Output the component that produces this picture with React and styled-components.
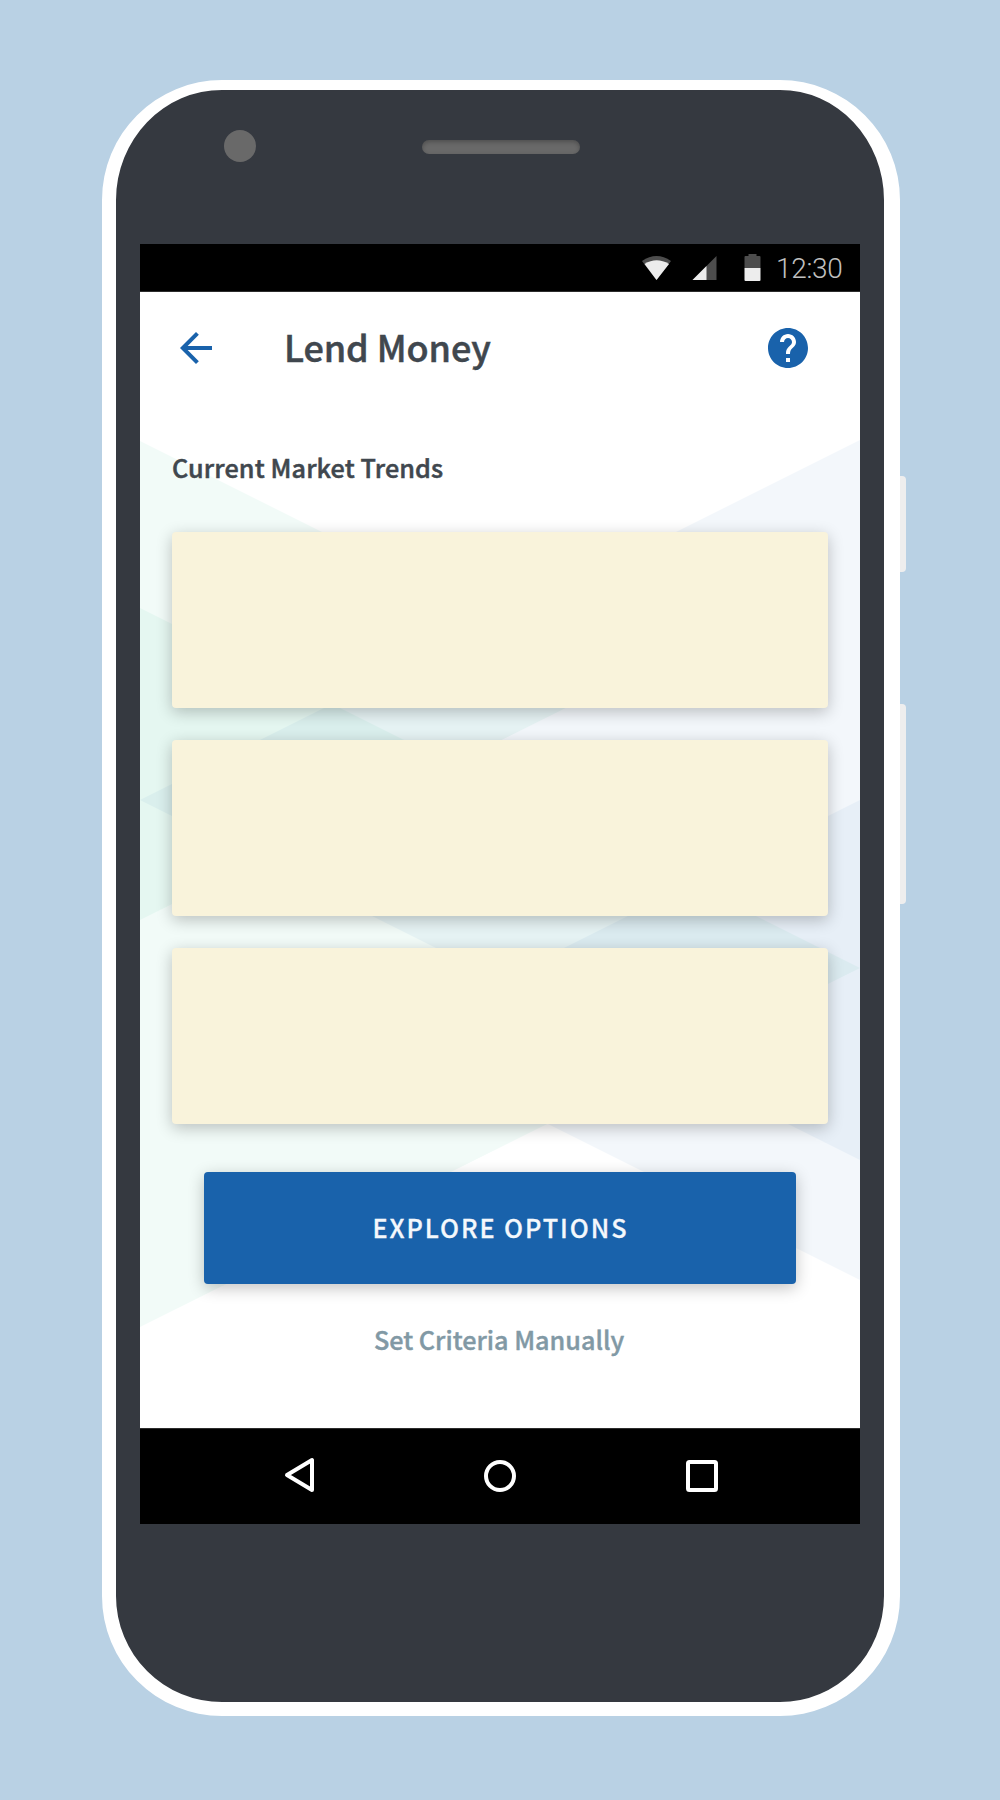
import React from "react";
import styled, { createGlobalStyle } from "styled-components";

const GlobalStyle = createGlobalStyle`
  body { margin: 0; background: #b9d1e4; }
  *, *::before, *::after { box-sizing: border-box; }
`;

const sans = `"Noto Sans CJK SC", "Noto Sans", sans-serif`;

const Stage = styled.main`
  height: 1800px;
  padding: 80px 94px 84px 102px;
  display: flex;
  background: #b9d1e4;
`;

const Phone = styled.div`
  width: 798px;
  height: 1636px;
  flex: none;
  padding: 0 24px;
  display: flex;
  flex-direction: column;
  background: #353940;
  border: solid #fff;
  border-width: 10px 16px 14px 14px;
  border-radius: 120px;
`;

const Earpiece = styled.div`
  height: 154px;
  flex: none;
  display: flex;
  align-items: flex-start;
  padding: 39.5px 0 0 84px;
`;

const Camera = styled.div`
  width: 32px;
  height: 32px;
  border-radius: 50%;
  background: #696969;
`;

const Speaker = styled.div`
  width: 158px;
  height: 14px;
  margin: 10.5px 0 0 166px;
  border-radius: 7px;
  background: #696969;
  box-shadow: inset 0 2px 4px rgba(0, 0, 0, 0.25);
`;

const SideKeys = styled.div`
  width: 6px;
  padding-top: 396px;
  display: flex;
  flex-direction: column;
  gap: 132px;
`;

const SideKey = styled.div`
  height: ${(p) => p.$height}px;
  flex: none;
  background: #eee;
  border-radius: 0 4px 4px 0;
`;

const Screen = styled.div`
  width: 720px;
  height: 1280px;
  flex: none;
  display: flex;
  flex-direction: column;
  background: #fff;
`;

const StatusBar = styled.div`
  height: 48px;
  flex: none;
  display: flex;
  align-items: center;
  justify-content: flex-end;
  padding-right: 17.5px;
  background: #000;
  border-bottom: 1px solid #2c2c2c;
`;

const StatusIcons = styled.svg`
  display: block;
  width: 136px;
  height: 47px;
`;

const Clock = styled.span`
  font: 300 28px/47px Roboto, sans-serif;
  letter-spacing: -0.3px;
  color: #c0c0c0;
  padding-top: 2px;
`;

const Content = styled.div`
  position: relative;
  flex: 1;
  display: flex;
  flex-direction: column;
`;

const Backdrop = styled.svg`
  position: absolute;
  inset: 0;
  width: 720px;
  height: 1136px;
`;

const AppBar = styled.header`
  position: relative;
  height: 112px;
  flex: none;
  display: flex;
  align-items: center;
  padding: 0 48px 0 32px;
`;

const Glyph = styled.svg`
  display: block;
  flex: none;
  width: 48px;
  height: 48px;
`;

const Title = styled.h1`
  flex: 1;
  margin: 0 0 4px 64px;
  font: 500 36px/48px ${sans};
  letter-spacing: -0.1px;
  -webkit-text-stroke: 0.5px;
  color: #40474e;
  white-space: nowrap;
`;

const Body = styled.section`
  position: relative;
  padding: 41px 32px 0;
  display: flex;
  flex-direction: column;
`;

const Subtitle = styled.h2`
  margin: 0;
  height: 87px;
  font: 500 25.2px/44px ${sans};
  letter-spacing: 0.12px;
  -webkit-text-stroke: 0.5px;
  color: #40474e;
  white-space: nowrap;
`;

const CardList = styled.div`
  display: flex;
  flex-direction: column;
  gap: 32px;
`;

const Card = styled.article`
  height: 176px;
  border-radius: 4px;
  background: #f9f3db;
  box-shadow: 0 4px 16px rgba(0, 0, 0, 0.24);
`;

const PrimaryButton = styled.button`
  height: 112px;
  margin: 48px 32px 0;
  padding: 0 0 2px;
  border: 0;
  border-radius: 4px;
  background: #1962ab;
  color: #f4f8fc;
  font: 500 25.2px/110px ${sans};
  letter-spacing: 1.95px;
  text-indent: 1px;
  -webkit-text-stroke: 0.3px;
  box-shadow: 0 4px 16px rgba(0, 0, 0, 0.24);
`;

const TextButton = styled.button`
  align-self: center;
  margin: 30px 2px 0 0;
  padding: 0;
  border: 0;
  background: none;
  color: #8199a5;
  font: 500 25.2px/50px ${sans};
  -webkit-text-stroke: 0.4px;
  white-space: nowrap;
`;

const NavBar = styled.nav`
  height: 96px;
  flex: none;
  display: flex;
  align-items: center;
  justify-content: center;
  gap: 154px;
  padding-bottom: 1px;
  background: #000;
  border-top: 1px solid #2c2c2c;
`;

export default function App() {
  return (
    <>
      <GlobalStyle />
      <Stage>
        <Phone>
          <Earpiece>
            <Camera />
            <Speaker />
          </Earpiece>
          <Screen>
            <StatusBar>
              <StatusIcons viewBox="639.5 244 136 47">
                <path d="M641.5 261 Q656 251 670.5 261 L656 280Z" fill="#4d4d4d" />
                <path d="M644 264 Q656 256.500 668.500 264 L656 280Z" fill="#ededed" />
                <path d="M692 280 L716 256 V280Z" fill="#4d4d4d" />
                <path d="M692 280 L706 266 V280Z" fill="#ededed" />
                <path d="M744 257 q0-1 1-1 h3 v-2 h8 v2 h3 q1 0 1 1 V268 H744Z" fill="#4d4d4d" />
                <path d="M744 268 H760 V280 q0 1-1 1 H745 q-1 0-1-1Z" fill="#ededed" />
              </StatusIcons>
              <Clock>12:30</Clock>
            </StatusBar>
            <Content>
              <Backdrop viewBox="140 292 720 1136">
                <g fill="#1ab87c" fillOpacity="0.055">
                  <path d="M140 441 L620 681 L140 920Z" />
                  <path d="M140 608 L860 968 L140 1327Z" />
                </g>
                <g fill="#1962ab" fillOpacity="0.05">
                  <path d="M860 440 L140 800 L860 1160Z" />
                  <path d="M860 800 L380 1040 L860 1280Z" />
                </g>
              </Backdrop>
              <AppBar>
                <Glyph viewBox="0 0 24 24">
                  <path
                    fill="#1962ab"
                    d="M20 11H7.830l5.590-5.590L12 4l-8 8 8 8 1.410-1.410L7.830 13H20v-2z"
                  />
                </Glyph>
                <Title>Lend Money</Title>
                <Glyph viewBox="0 0 24 24">
                  <path
                    fill="#1962ab"
                    d="M12 2C6.480 2 2 6.480 2 12s4.480 10 10 10 10-4.480 10-10S17.520 2 12 2zm1 17h-2v-2h2v2zm2.070-7.750l-.9.920C13.450 12.900 13 13.500 13 15h-2v-.5c0-1.100.450-2.100 1.170-2.830l1.240-1.260c.370-.360.590-.860.590-1.410 0-1.100-.9-2-2-2s-2 .9-2 2H8c0-2.210 1.790-4 4-4s4 1.790 4 4c0 .880-.360 1.680-.930 2.250z"
                  />
                </Glyph>
              </AppBar>
              <Body>
                <Subtitle>Current Market Trends</Subtitle>
                <CardList>
                  <Card />
                  <Card />
                  <Card />
                </CardList>
                <PrimaryButton>EXPLORE OPTIONS</PrimaryButton>
                <TextButton>Set Criteria Manually</TextButton>
              </Body>
            </Content>
            <NavBar>
              <Glyph viewBox="0 0 48 48">
                <path d="M13 23 L38 8 V38Z" fill="none" stroke="#fff" strokeWidth="4" strokeLinejoin="round" />
              </Glyph>
              <Glyph viewBox="0 0 48 48">
                <circle cx="24" cy="24" r="14" fill="none" stroke="#fff" strokeWidth="4" />
              </Glyph>
              <Glyph viewBox="0 0 48 48">
                <rect x="10" y="10" width="28" height="28" rx="1.5" fill="none" stroke="#fff" strokeWidth="4" />
              </Glyph>
            </NavBar>
          </Screen>
        </Phone>
        <SideKeys>
          <SideKey $height={96} />
          <SideKey $height={200} />
        </SideKeys>
      </Stage>
    </>
  );
}
